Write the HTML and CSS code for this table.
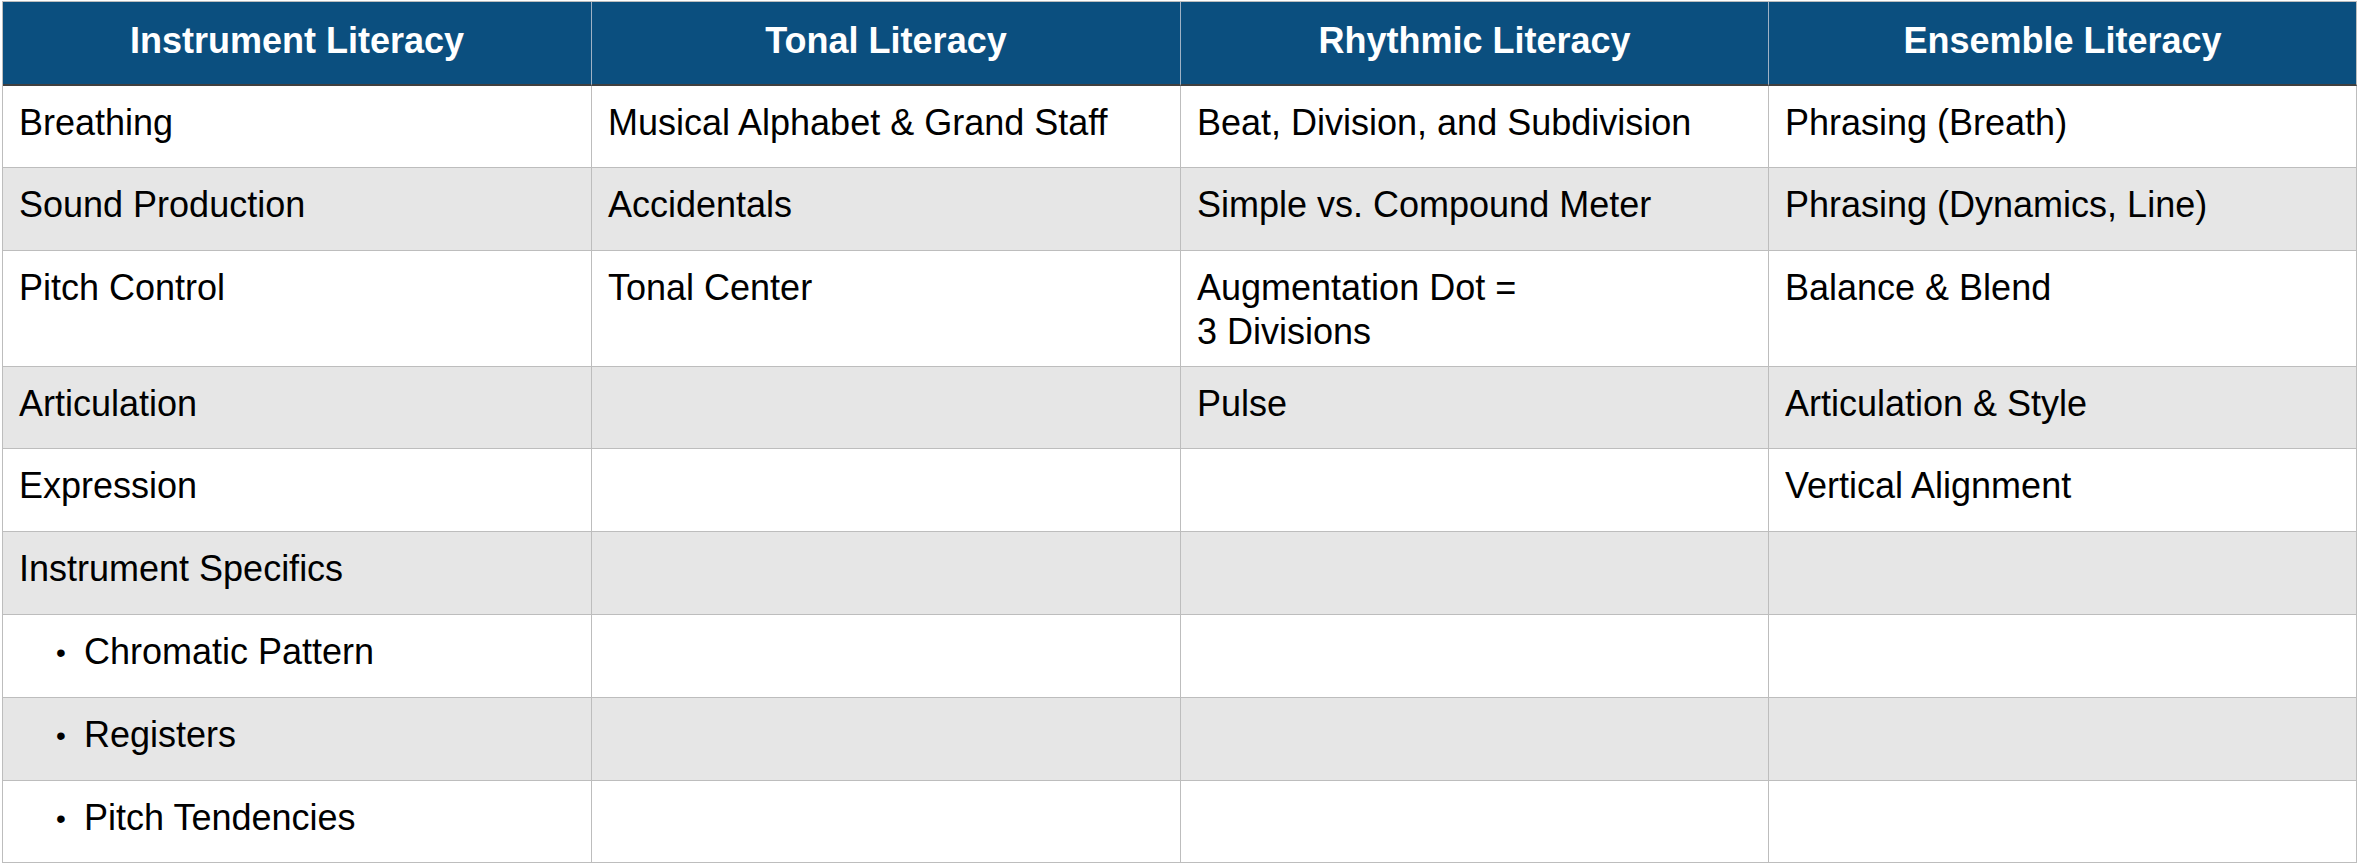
FILE: index.html
```html
<!DOCTYPE html>
<html lang="en">
<head>
<meta charset="utf-8">
<title>Literacy Table</title>
<link rel="stylesheet" href="styles.css">
</head>
<body>
<div class="grid">
  <div class="cell head">Instrument Literacy</div>
  <div class="cell head">Tonal Literacy</div>
  <div class="cell head">Rhythmic Literacy</div>
  <div class="cell head last">Ensemble Literacy</div>

  <div class="cell">Breathing</div>
  <div class="cell">Musical Alphabet &amp; Grand Staff</div>
  <div class="cell">Beat, Division, and Subdivision</div>
  <div class="cell">Phrasing (Breath)</div>

  <div class="cell alt">Sound Production</div>
  <div class="cell alt">Accidentals</div>
  <div class="cell alt">Simple vs. Compound Meter</div>
  <div class="cell alt">Phrasing (Dynamics, Line)</div>

  <div class="cell">Pitch Control</div>
  <div class="cell">Tonal Center</div>
  <div class="cell">Augmentation Dot =<br>3 Divisions</div>
  <div class="cell">Balance &amp; Blend</div>

  <div class="cell alt">Articulation</div>
  <div class="cell alt"></div>
  <div class="cell alt">Pulse</div>
  <div class="cell alt">Articulation &amp; Style</div>

  <div class="cell">Expression</div>
  <div class="cell"></div>
  <div class="cell"></div>
  <div class="cell">Vertical Alignment</div>

  <div class="cell alt">Instrument Specifics</div>
  <div class="cell alt"></div>
  <div class="cell alt"></div>
  <div class="cell alt"></div>

  <div class="cell"><span class="bullet">•</span>Chromatic Pattern</div>
  <div class="cell"></div>
  <div class="cell"></div>
  <div class="cell"></div>

  <div class="cell alt"><span class="bullet">•</span>Registers</div>
  <div class="cell alt"></div>
  <div class="cell alt"></div>
  <div class="cell alt"></div>

  <div class="cell"><span class="bullet">•</span>Pitch Tendencies</div>
  <div class="cell"></div>
  <div class="cell"></div>
  <div class="cell"></div>
</div>
</body>
</html>
```

FILE: styles.css
```css
html, body {
  margin: 0;
  padding: 0;
  background: #ffffff;
}

body {
  font-family: "Liberation Sans", Arial, Helvetica, sans-serif;
  font-size: 36px;
  line-height: 44px;
  color: #000000;
}

.grid {
  margin: 1px 0 0 2px;
  display: grid;
  grid-template-columns: 589px 589px 588px 588px;
  grid-template-rows: 84px 82px 83px 116px 82px 83px 83px 83px 83px 82px;
  width: max-content;
  border-left: 1px solid #bdbdbd;
  border-top: 1px solid #bdbdbd;
}

.cell {
  box-sizing: border-box;
  border-right: 1px solid #bdbdbd;
  border-bottom: 1px solid #bdbdbd;
  padding: 15px 16px 0 16px;
  white-space: nowrap;
  background: #ffffff;
}

.cell.alt {
  background: #e6e6e6;
}

.cell.head {
  background: #0b4f7f;
  color: #ffffff;
  font-weight: bold;
  display: flex;
  align-items: center;
  justify-content: center;
  padding: 0 0 5px 0;
  border-right-color: #9fb2c5;
  border-bottom: 2px solid #404040;
}

.cell.head.last {
  border-right-color: #bdbdbd;
}

.bullet {
  display: inline-block;
  margin-left: 37px;
  width: 28px;
  font-size: 28px;
  vertical-align: top;
  line-height: 46px;
}
```
